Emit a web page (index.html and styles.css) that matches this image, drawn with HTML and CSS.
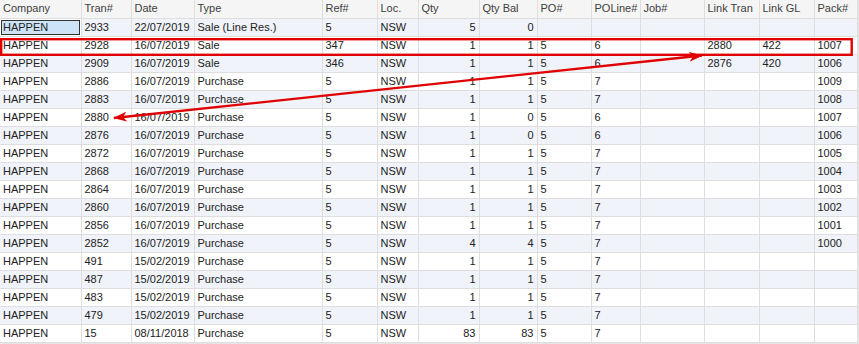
FILE: index.html
```html
<!DOCTYPE html>
<html lang="en">
<head>
  <meta charset="UTF-8" />
  <title>Transactions</title>
  <link rel="stylesheet" href="styles.css">
</head>
<body>
  <div class="grid-wrap">
    <table class="grid">
      <colgroup>
        <col class="c-company"><col class="c-tran"><col class="c-date"><col class="c-type">
        <col class="c-ref"><col class="c-loc"><col class="c-qty"><col class="c-qtybal">
        <col class="c-po"><col class="c-poline"><col class="c-job"><col class="c-link">
        <col class="c-gl"><col class="c-pack">
      </colgroup>
      <thead>
        <tr>
          <th>Company</th><th>Tran#</th><th>Date</th><th>Type</th><th>Ref#</th><th>Loc.</th>
          <th>Qty</th><th>Qty Bal</th><th>PO#</th><th>POLine#</th><th>Job#</th>
          <th>Link Tran</th><th>Link GL</th><th>Pack#</th>
        </tr>
      </thead>
      <tbody>
        <tr><td class="focus">HAPPEN</td><td>2933</td><td>22/07/2019</td><td>Sale (Line Res.)</td><td>5</td><td>NSW</td><td class="num">5</td><td class="num">0</td><td></td><td></td><td></td><td></td><td></td><td></td></tr>
        <tr><td>HAPPEN</td><td>2928</td><td>16/07/2019</td><td>Sale</td><td>347</td><td>NSW</td><td class="num">1</td><td class="num">1</td><td>5</td><td>6</td><td></td><td>2880</td><td>422</td><td>1007</td></tr>
        <tr><td>HAPPEN</td><td>2909</td><td>16/07/2019</td><td>Sale</td><td>346</td><td>NSW</td><td class="num">1</td><td class="num">1</td><td>5</td><td>6</td><td></td><td>2876</td><td>420</td><td>1006</td></tr>
        <tr><td>HAPPEN</td><td>2886</td><td>16/07/2019</td><td>Purchase</td><td>5</td><td>NSW</td><td class="num">1</td><td class="num">1</td><td>5</td><td>7</td><td></td><td></td><td></td><td>1009</td></tr>
        <tr><td>HAPPEN</td><td>2883</td><td>16/07/2019</td><td>Purchase</td><td>5</td><td>NSW</td><td class="num">1</td><td class="num">1</td><td>5</td><td>7</td><td></td><td></td><td></td><td>1008</td></tr>
        <tr><td>HAPPEN</td><td>2880</td><td>16/07/2019</td><td>Purchase</td><td>5</td><td>NSW</td><td class="num">1</td><td class="num">0</td><td>5</td><td>6</td><td></td><td></td><td></td><td>1007</td></tr>
        <tr><td>HAPPEN</td><td>2876</td><td>16/07/2019</td><td>Purchase</td><td>5</td><td>NSW</td><td class="num">1</td><td class="num">0</td><td>5</td><td>6</td><td></td><td></td><td></td><td>1006</td></tr>
        <tr><td>HAPPEN</td><td>2872</td><td>16/07/2019</td><td>Purchase</td><td>5</td><td>NSW</td><td class="num">1</td><td class="num">1</td><td>5</td><td>7</td><td></td><td></td><td></td><td>1005</td></tr>
        <tr><td>HAPPEN</td><td>2868</td><td>16/07/2019</td><td>Purchase</td><td>5</td><td>NSW</td><td class="num">1</td><td class="num">1</td><td>5</td><td>7</td><td></td><td></td><td></td><td>1004</td></tr>
        <tr><td>HAPPEN</td><td>2864</td><td>16/07/2019</td><td>Purchase</td><td>5</td><td>NSW</td><td class="num">1</td><td class="num">1</td><td>5</td><td>7</td><td></td><td></td><td></td><td>1003</td></tr>
        <tr><td>HAPPEN</td><td>2860</td><td>16/07/2019</td><td>Purchase</td><td>5</td><td>NSW</td><td class="num">1</td><td class="num">1</td><td>5</td><td>7</td><td></td><td></td><td></td><td>1002</td></tr>
        <tr><td>HAPPEN</td><td>2856</td><td>16/07/2019</td><td>Purchase</td><td>5</td><td>NSW</td><td class="num">1</td><td class="num">1</td><td>5</td><td>7</td><td></td><td></td><td></td><td>1001</td></tr>
        <tr><td>HAPPEN</td><td>2852</td><td>16/07/2019</td><td>Purchase</td><td>5</td><td>NSW</td><td class="num">4</td><td class="num">4</td><td>5</td><td>7</td><td></td><td></td><td></td><td>1000</td></tr>
        <tr><td>HAPPEN</td><td>491</td><td>15/02/2019</td><td>Purchase</td><td>5</td><td>NSW</td><td class="num">1</td><td class="num">1</td><td>5</td><td>7</td><td></td><td></td><td></td><td></td></tr>
        <tr><td>HAPPEN</td><td>487</td><td>15/02/2019</td><td>Purchase</td><td>5</td><td>NSW</td><td class="num">1</td><td class="num">1</td><td>5</td><td>7</td><td></td><td></td><td></td><td></td></tr>
        <tr><td>HAPPEN</td><td>483</td><td>15/02/2019</td><td>Purchase</td><td>5</td><td>NSW</td><td class="num">1</td><td class="num">1</td><td>5</td><td>7</td><td></td><td></td><td></td><td></td></tr>
        <tr><td>HAPPEN</td><td>479</td><td>15/02/2019</td><td>Purchase</td><td>5</td><td>NSW</td><td class="num">1</td><td class="num">1</td><td>5</td><td>7</td><td></td><td></td><td></td><td></td></tr>
        <tr><td>HAPPEN</td><td>15</td><td>08/11/2018</td><td>Purchase</td><td>5</td><td>NSW</td><td class="num">83</td><td class="num">83</td><td>5</td><td>7</td><td></td><td></td><td></td><td></td></tr>
      </tbody>
    </table>

    <!-- annotation drawn over the grid -->
    <svg class="markup" width="859" height="344" viewBox="0 0 859 344">
      <defs>
        <marker id="head" viewBox="0 0 14 10" refX="13" refY="5" markerWidth="14" markerHeight="10"
                markerUnits="userSpaceOnUse" orient="auto-start-reverse">
          <path d="M0,0 L14,5 L0,10 L4,5 Z" fill="#e00000" />
        </marker>
      </defs>
      <rect x="1.2" y="39.2" width="850.5" height="15.6" fill="none" stroke="#e00000" stroke-width="2.4" />
      <line x1="114" y1="118" x2="702" y2="55.5" stroke="#e00000" stroke-width="2.4"
            marker-start="url(#head)" marker-end="url(#head)" />
    </svg>
  </div>
</body>
</html>
```

FILE: styles.css
```css
html, body {
  margin: 0; padding: 0;
  background: #e6e6e6;
  font-family: "Liberation Sans", Arial, sans-serif;
  font-size: 11px;
}

.grid-wrap {
  position: relative;
  width: 859px; height: 344px;
  overflow: hidden;
}

.grid {
  border-collapse: collapse;
  table-layout: fixed;
  width: 857px;
  background: #fff;
  color: #222;
}

.c-company { width: 81px; }
.c-tran    { width: 50px; }
.c-date    { width: 63px; }
.c-type    { width: 128px; }
.c-ref     { width: 55px; }
.c-loc     { width: 41px; }
.c-qty     { width: 61px; }
.c-qtybal  { width: 58px; }
.c-po      { width: 54px; }
.c-poline  { width: 49px; }
.c-job     { width: 64px; }
.c-link    { width: 55px; }
.c-gl      { width: 55px; }
.c-pack    { width: 43px; }

.grid tr { height: 18px; }

.grid th, .grid td {
  border-right: 1px solid #dedede;
  border-bottom: 1px solid #dedede;
  padding: 0 3px;
  line-height: 17px;
  white-space: nowrap;
  overflow: hidden;
  text-align: left;
}

.grid th {
  background: #f5f5f5;
  font-weight: normal;
  color: #404040;
}

.grid tbody tr:nth-child(odd) { background: #f0f3f9; }

.grid td.num { text-align: right; }

.grid td.focus {
  background: #cde4f7;
  box-shadow: inset 0 0 0 1px #fff, inset 0 0 0 2px #333;
  padding-left: 3px;
}

.markup {
  position: absolute; left: 0; top: 0;
  pointer-events: none;
}
```
